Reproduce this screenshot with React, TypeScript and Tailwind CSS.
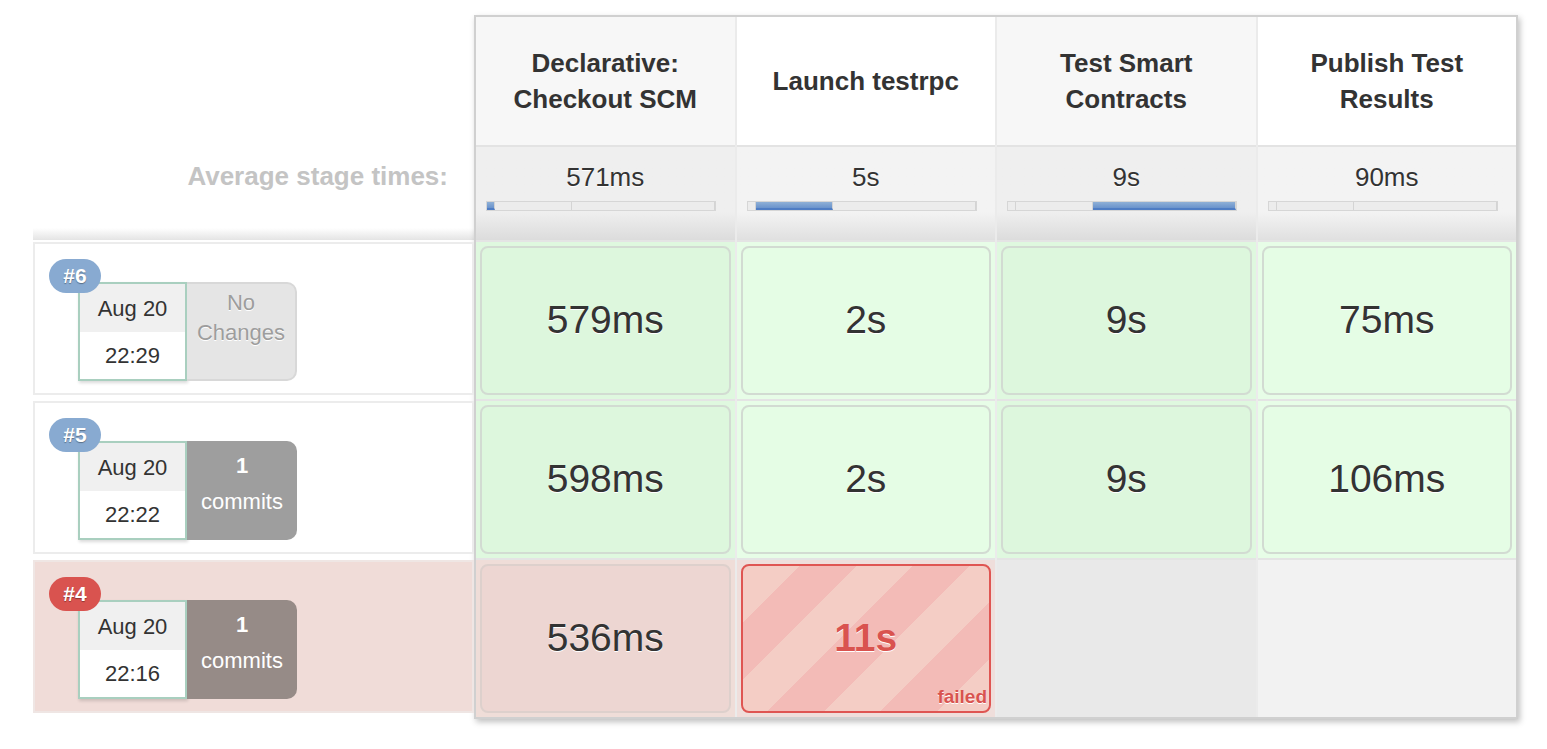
import React from "react";

type Stage = { name: string[]; avg: string; segment: number };

const stages: Stage[] = [
  { name: ["Declarative:", "Checkout SCM"], avg: "571ms", segment: 0 },
  { name: ["Launch testrpc"], avg: "5s", segment: 1 },
  { name: ["Test Smart", "Contracts"], avg: "9s", segment: 2 },
  { name: ["Publish Test", "Results"], avg: "90ms", segment: 3 },
];

// widths of the four stage segments on the 230px timing bar
const segmentWidths = ["w-[8px]", "w-[77px]", "w-[143px]", "w-[2px]"];

type Cell = { time: string; status: "success" | "failed" | "empty" | "aborted" };

type Build = {
  id: string;
  date: string;
  time: string;
  changes: "none" | number;
  failed?: boolean;
  cells: Cell[];
};

const builds: Build[] = [
  {
    id: "#6",
    date: "Aug 20",
    time: "22:29",
    changes: "none",
    cells: [
      { time: "579ms", status: "success" },
      { time: "2s", status: "success" },
      { time: "9s", status: "success" },
      { time: "75ms", status: "success" },
    ],
  },
  {
    id: "#5",
    date: "Aug 20",
    time: "22:22",
    changes: 1,
    cells: [
      { time: "598ms", status: "success" },
      { time: "2s", status: "success" },
      { time: "9s", status: "success" },
      { time: "106ms", status: "success" },
    ],
  },
  {
    id: "#4",
    date: "Aug 20",
    time: "22:16",
    changes: 1,
    failed: true,
    cells: [
      { time: "536ms", status: "aborted" },
      { time: "11s", status: "failed" },
      { time: "", status: "empty" },
      { time: "", status: "empty" },
    ],
  },
];

function TimingBar({ active }: { active: number }) {
  return (
    <div className="ml-[10px] mt-[9px] flex h-[10px] w-[230px] overflow-hidden border border-[#d6d6d6] bg-[#e9e9e9] shadow-[inset_0_1px_2px_rgba(0,0,0,0.1)]">
      {segmentWidths.map((w, i) => (
        <div
          key={i}
          className={
            w +
            " h-full shrink-0 border-r border-[#d4d4d4] last:border-r-0 " +
            (i === active
              ? "bg-linear-to-b from-[#8fb0d6] to-[#6a93cc] border-b-2 border-b-[#4f7dc4]"
              : "bg-[#ececec]")
          }
        />
      ))}
    </div>
  );
}

function StageCell({ cell, col }: { cell: Cell; col: number }) {
  const odd = col % 2 === 0;
  if (cell.status === "empty") {
    return (
      <div
        className={
          "h-[159px] border-t-2 border-[#e4e4e4] " +
          (odd ? "bg-[#e9e9e9]" : "bg-[#f2f2f2]")
        }
      />
    );
  }
  if (cell.status === "failed") {
    return (
      <div className="h-[159px] border-t-2 border-[#e4e4e4] bg-[#efdedb] px-[4px] pt-[4px] pb-[4px]">
        <div className="relative flex h-full items-center justify-center rounded-[8px] border-2 border-[#df5552] bg-[repeating-linear-gradient(135deg,#f4cdc5_0px,#f4cdc5_40px,#f3bbb7_40px,#f3bbb7_80px)]">
          <span className="text-[39px] font-bold text-[#d9534f] [text-shadow:0_1px_0_#fff]">
            {cell.time}
          </span>
          <span className="absolute right-[2px] bottom-[5px] text-[19px] leading-none font-bold text-[#d9534f] [text-shadow:0_1px_0_#fff]">
            failed
          </span>
        </div>
      </div>
    );
  }
  const outer =
    cell.status === "aborted"
      ? "bg-[#efddd8]"
      : odd
        ? "bg-[#dff8df]"
        : "bg-[#e7fde7]";
  const inner =
    cell.status === "aborted"
      ? "bg-[#edd6d2] border-[#ddd0cc]"
      : odd
        ? "bg-[#ddf7dd] border-[#d2dbd2]"
        : "bg-[#e5fde5] border-[#d2dbd2]";
  return (
    <div className={"h-[159px] border-t-2 border-[#e4e4e4] px-[4px] pt-[4px] pb-[4px] " + outer}>
      <div
        className={
          "flex h-full items-center justify-center rounded-[8px] border-2 " + inner
        }
      >
        <span className="text-[39px] text-[#333] [text-shadow:0_1px_0_#fff]">{cell.time}</span>
      </div>
    </div>
  );
}

function BuildLabel({ build }: { build: Build }) {
  return (
    <div className="h-[159px] pt-[2px] pb-[4px]">
      <div
        className={
          "relative h-full border-2 " +
          (build.failed ? "border-[#efe6e4] bg-[#f0dcd8]" : "border-[#ececec] bg-white")
        }
      >
        <div className="flex pt-[38px] pl-[43px]">
          <div className="w-[109px] border-2 border-[#a9cfbf] bg-white shadow-[1px_2px_3px_rgba(0,0,0,0.15)]">
            <div className="flex h-[48px] items-center justify-center bg-[#f0f0f0] text-[22px] text-[#333]">
              {build.date}
            </div>
            <div className="flex h-[46px] items-center justify-center text-[22px] text-[#333]">
              {build.time}
            </div>
          </div>
          {build.changes === "none" ? (
            <div className="flex h-[99px] w-[110px] flex-col items-center rounded-r-[10px] border-2 border-l-0 border-[#d8d8d8] bg-[#e5e5e5] pt-[4px] text-[22px] leading-[30px] text-[#9d9d9d] [text-shadow:0_1px_0_#fff]">
              <span>No</span>
              <span>Changes</span>
            </div>
          ) : (
            <div
              className={
                "flex h-[99px] w-[110px] flex-col items-center rounded-r-[10px] pt-[10px] text-[22px] text-white " +
                (build.failed ? "bg-[#968b87]" : "bg-[#9e9e9e]")
              }
            >
              <span className="leading-[30px] font-bold">{build.changes}</span>
              <span className="mt-[6px] leading-[30px]">commits</span>
            </div>
          )}
        </div>
        <div
          className={
            "absolute top-[15px] left-[14px] flex h-[34px] w-[52px] items-center justify-center rounded-full text-[21px] font-bold text-white [text-shadow:0_1px_1px_rgba(0,0,0,0.35)] " +
            (build.failed ? "bg-[#d9534f]" : "bg-[#88aad1]")
          }
        >
          {build.id}
        </div>
      </div>
    </div>
  );
}

export default function App() {
  return (
    <div className="min-h-screen bg-white font-['Liberation_Sans',Arial,sans-serif] text-[#333]">
      <div className="flex pt-[15px] pl-[33px]">
        <div className="flex w-[441px] flex-col">
          <div className="h-[130px]" />
          <div className="flex h-[95px] flex-col">
            <div className="flex flex-1 justify-end pt-[16px] pr-[26px] text-[26px] leading-[30px] font-bold text-[#c4c4c4]">
              Average stage times:
            </div>
            <div className="h-[12px] bg-linear-to-b from-white to-[#e4e4e4]" />
          </div>
          {builds.map((b) => (
            <BuildLabel key={b.id} build={b} />
          ))}
        </div>

        <div className="w-[1044px] border-2 border-[#d0d0d0] bg-[#ebebeb] shadow-[2px_3px_6px_rgba(0,0,0,0.25)]">
          <div className="grid grid-cols-4 gap-x-[2px]">
            {stages.map((s, i) => (
              <div
                key={s.avg}
                className={
                  "flex h-[128px] flex-col items-center justify-center text-[26px] leading-[36px] font-bold text-[#333] " +
                  (i % 2 === 0 ? "bg-[#f7f7f7]" : "bg-white")
                }
              >
                {s.name.map((line) => (
                  <span key={line}>{line}</span>
                ))}
              </div>
            ))}
            {stages.map((s, i) => (
              <div
                key={s.avg + "-avg"}
                className={
                  "flex h-[95px] flex-col border-t-2 border-[#e3e3e3] " +
                  (i % 2 === 0
                    ? "bg-linear-to-b from-[#efefef] from-70% to-[#dcdcdc]"
                    : "bg-linear-to-b from-[#f3f3f3] from-70% to-[#e0e0e0]")
                }
              >
                <div className="pt-[15px] text-center text-[26px] leading-[30px] [text-shadow:0_1px_0_#fff]">
                  {s.avg}
                </div>
                <TimingBar active={s.segment} />
              </div>
            ))}
            {builds.map((b) =>
              b.cells.map((c, i) => <StageCell key={b.id + i} cell={c} col={i} />)
            )}
          </div>
        </div>
      </div>
    </div>
  );
}
